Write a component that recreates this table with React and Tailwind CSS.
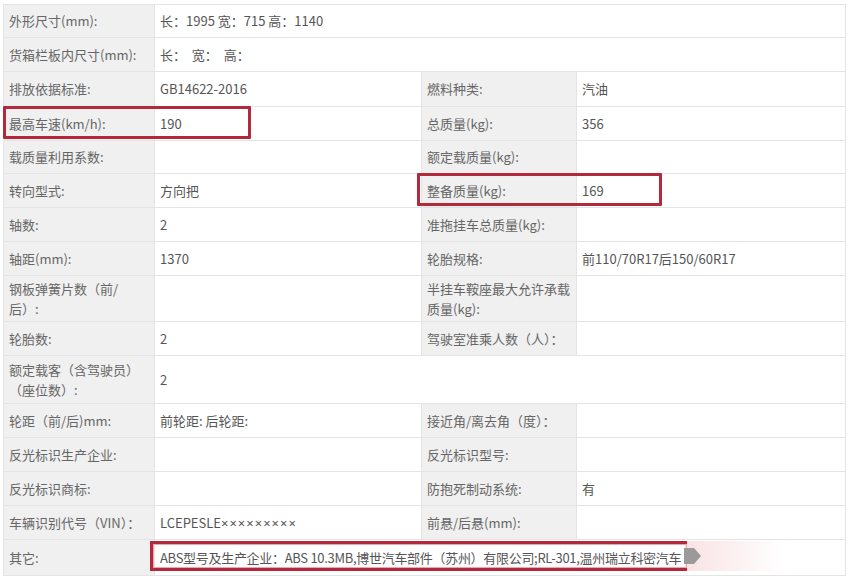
import React from 'react'

// spec rows: [label, value, label2, value2] — wide means the value spans 3 columns
const rows = [
  { h: 'h-[33px]', a: '外形尺寸(mm):', b: '长：1995 宽：715 高：1140', wide: true },
  { h: 'h-[34px]', a: '货箱栏板内尺寸(mm):', b: '长：  宽：  高：', wide: true },
  { h: 'h-[35px]', a: '排放依据标准:', b: 'GB14622-2016', c: '燃料种类:', d: '汽油' },
  { h: 'h-[34px]', a: '最高车速(km/h):', b: '190', c: '总质量(kg):', d: '356' },
  { h: 'h-[33px]', a: '载质量利用系数:', b: '', c: '额定载质量(kg):', d: '' },
  { h: 'h-[34px]', a: '转向型式:', b: '方向把', c: '整备质量(kg):', d: '169' },
  { h: 'h-[34px]', a: '轴数:', b: '2', c: '准拖挂车总质量(kg):', d: '' },
  { h: 'h-[34px]', a: '轴距(mm):', b: '1370', c: '轮胎规格:', d: '前110/70R17后150/60R17' },
  { h: 'h-[46px]', a: ['钢板弹簧片数（前/', '后）:'], b: '', c: ['半挂车鞍座最大允许承载', '质量(kg):'], d: '' },
  { h: 'h-[34px]', a: '轮胎数:', b: '2', c: '驾驶室准乘人数（人）：', d: '' },
  { h: 'h-[48px]', a: ['额定载客（含驾驶员）', '（座位数）:'], b: '2', wide: true },
  { h: 'h-[34px]', a: '轮距（前/后)mm:', b: '前轮距: 后轮距:', c: '接近角/离去角（度）：', d: '' },
  { h: 'h-[34px]', a: '反光标识生产企业:', b: '', c: '反光标识型号:', d: '' },
  { h: 'h-[34px]', a: '反光标识商标:', b: '', c: '防抱死制动系统:', d: '有' },
  {
    h: 'h-[34px]',
    a: '车辆识别代号（VIN）：',
    b: (
      <>
        LCEPESLE<span className="font-['Noto_Sans',sans-serif] text-[13px] tracking-[1px]">×××××××××</span>
      </>
    ),
    c: '前悬/后悬(mm):',
    d: '',
  },
]

function Lines({ v }) {
  if (Array.isArray(v)) {
    return v.map((t, i) => (
      <div key={i} className="leading-5">{t}</div>
    ))
  }
  return v
}

const label = 'bg-[#f0f0f0] text-[#666] pl-[5px] pr-1 align-middle border border-[#e4e4e4] leading-5'
const value = 'bg-white text-[#555] pl-[5px] pr-1 align-middle border border-[#e4e4e4] leading-5'

export default function App() {
  return (
    <div className="w-[852px] h-[576px] bg-white overflow-hidden font-['Noto_Sans_CJK_SC','Noto_Sans',sans-serif] text-[13px]">
      <div className="relative ml-[3px] mt-[4px] w-[842px]">
        <table className="table-fixed border-collapse w-[842px]">
          <colgroup>
            <col className="w-[151px]" />
            <col className="w-[267px]" />
            <col className="w-[155px]" />
            <col className="w-[269px]" />
          </colgroup>
          <tbody>
            {rows.map((r, i) => (
              <tr key={i} className={r.h}>
                <td className={label}><Lines v={r.a} /></td>
                {r.wide ? (
                  <td colSpan={3} className={value + ' whitespace-pre'}>{r.b}</td>
                ) : (
                  <>
                    <td className={value}>{r.b}</td>
                    <td className={label}><Lines v={r.c} /></td>
                    <td className={value}>{r.d}</td>
                  </>
                )}
              </tr>
            ))}
            <tr className="h-[36px]">
              <td className={label}>其它:</td>
              <td colSpan={3} className={value}>
                <div className="w-[524px] whitespace-nowrap tracking-[-0.3px]">
                  ABS型号及生产企业：ABS 10.3MB,博世汽车部件（苏州）有限公司;RL-301,温州瑞立科密汽车
                </div>
              </td>
            </tr>
          </tbody>
        </table>

        {/* red annotation boxes */}
        <div className="absolute left-0 top-[102px] w-[248px] h-[33px] border-[3px] border-[#b3283a] rounded-[1px]" />
        <div className="absolute left-[414px] top-[169px] w-[245px] h-[33px] border-[3px] border-[#b3283a] rounded-[1px]" />
        <div className="absolute left-[682px] top-[537px] w-[100px] h-[30px] bg-gradient-to-r from-[#f6d6d8] to-transparent opacity-70" />
        <div className="absolute left-[147px] top-[537px] w-[537px] h-[30px] border-[3px] border-r-0 border-[#b3283a] shadow-[inset_0_0_0_1px_#e9a7ae]" />
        <svg className="absolute left-[681px] top-[540px]" width="18" height="24" viewBox="0 0 18 24">
          <polygon points="0,4 10,4 17,12 10,20 0,20" fill="#9a9a9a" />
        </svg>
      </div>
    </div>
  )
}
